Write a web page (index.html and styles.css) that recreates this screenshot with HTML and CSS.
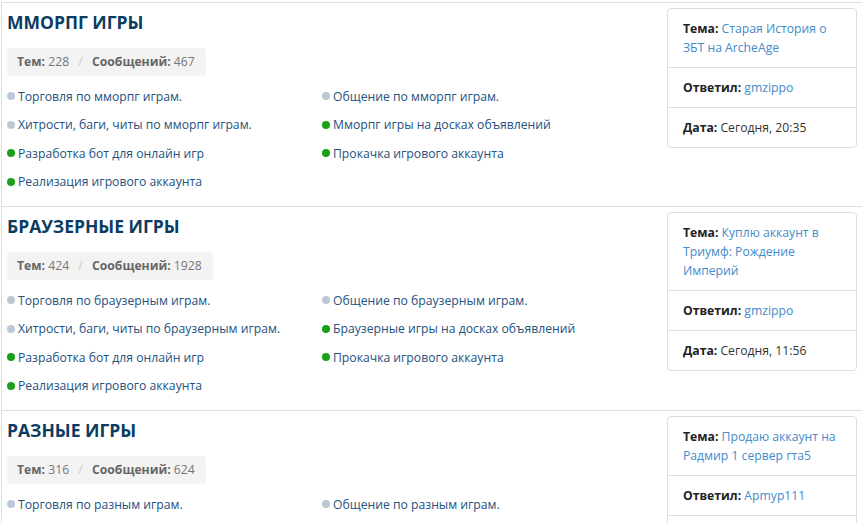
FILE: index.html
```html
<!DOCTYPE html>
<html lang="ru">
<head>
<meta charset="utf-8">
<title>Форум</title>
<link rel="stylesheet" href="styles.css">
</head>
<body>
<div class="forum">
  <section class="row">
    <div class="main">
      <h2 class="title">ММОРПГ ИГРЫ</h2>
      <div class="stats"><b>Тем:</b> 228 <span class="sep">/</span> <b>Сообщений:</b> 467</div>
      <ul class="subs">
        <li><span class="dot"></span><a href="#">Торговля по мморпг играм.</a></li>
        <li><span class="dot"></span><a href="#">Общение по мморпг играм.</a></li>
        <li><span class="dot"></span><a href="#">Хитрости, баги, читы по мморпг играм.</a></li>
        <li><span class="dot new"></span><a href="#">Мморпг игры на досках объявлений</a></li>
        <li><span class="dot new"></span><a href="#">Разработка бот для онлайн игр</a></li>
        <li><span class="dot new"></span><a href="#">Прокачка игрового аккаунта</a></li>
        <li><span class="dot new"></span><a href="#">Реализация игрового аккаунта</a></li>
      </ul>
    </div>
    <aside class="last">
      <div class="cell"><b>Тема:</b> <a href="#">Старая История о ЗБТ на ArcheAge</a></div>
      <div class="cell"><b>Ответил:</b> <a href="#">gmzippo</a></div>
      <div class="cell"><b>Дата:</b> Сегодня, 20:35</div>
    </aside>
  </section>
  <section class="row">
    <div class="main">
      <h2 class="title">БРАУЗЕРНЫЕ ИГРЫ</h2>
      <div class="stats"><b>Тем:</b> 424 <span class="sep">/</span> <b>Сообщений:</b> 1928</div>
      <ul class="subs">
        <li><span class="dot"></span><a href="#">Торговля по браузерным играм.</a></li>
        <li><span class="dot"></span><a href="#">Общение по браузерным играм.</a></li>
        <li><span class="dot"></span><a href="#">Хитрости, баги, читы по браузерным играм.</a></li>
        <li><span class="dot new"></span><a href="#">Браузерные игры на досках объявлений</a></li>
        <li><span class="dot new"></span><a href="#">Разработка бот для онлайн игр</a></li>
        <li><span class="dot new"></span><a href="#">Прокачка игрового аккаунта</a></li>
        <li><span class="dot new"></span><a href="#">Реализация игрового аккаунта</a></li>
      </ul>
    </div>
    <aside class="last">
      <div class="cell"><b>Тема:</b> <a href="#">Куплю аккаунт в Триумф: Рождение Империй</a></div>
      <div class="cell"><b>Ответил:</b> <a href="#">gmzippo</a></div>
      <div class="cell"><b>Дата:</b> Сегодня, 11:56</div>
    </aside>
  </section>
  <section class="row">
    <div class="main">
      <h2 class="title">РАЗНЫЕ ИГРЫ</h2>
      <div class="stats"><b>Тем:</b> 316 <span class="sep">/</span> <b>Сообщений:</b> 624</div>
      <ul class="subs">
        <li><span class="dot"></span><a href="#">Торговля по разным играм.</a></li>
        <li><span class="dot"></span><a href="#">Общение по разным играм.</a></li>
        <li><span class="dot"></span><a href="#">Хитрости, баги, читы по разным играм.</a></li>
        <li><span class="dot new"></span><a href="#">Разные игры на досках объявлений</a></li>
      </ul>
    </div>
    <aside class="last">
      <div class="cell"><b>Тема:</b> <a href="#">Продаю аккаунт на Радмир 1 сервер гта5</a></div>
      <div class="cell"><b>Ответил:</b> <a href="#">Apmyp111</a></div>
      <div class="cell"><b>Дата:</b> Сегодня, 10:12</div>
    </aside>
  </section>
</div>
</body>
</html>
```

FILE: styles.css
```css
html, body {
  margin: 0;
  padding: 0;
  background: #fff;
}
body {
  font-family: "Open Sans", "Liberation Sans", sans-serif;
  font-size: 12px;
  color: #333;
}
.forum {
  margin: 2px 0 0 1px;
  border-top: 1px solid #ddd;
  border-left: 1px solid #ddd;
}
.row {
  display: flex;
  align-items: flex-start;
  padding: 5px 5px 10px 5px;
  border-bottom: 1px solid #ddd;
}
.main {
  flex: 1;
  min-width: 0;
}
.title {
  margin: 0;
  font-size: 17.5px;
  line-height: 28px;
  font-weight: 700;
  color: #0b3c61;
}
.stats {
  display: inline-block;
  margin-top: 12px;
  height: 28px;
  line-height: 28px;
  padding: 0 11px 0 10px;
  background: #f3f3f3;
  border-radius: 4px;
  color: #777;
  font-size: 12.2px;
}
.stats b {
  color: #666;
}
.stats .sep {
  color: #ccc;
  margin: 0 6px;
}
.subs {
  list-style: none;
  margin: 6px 0 0;
  padding: 0;
  display: grid;
  grid-template-columns: 315px 1fr;
}
.subs li {
  display: flex;
  align-items: center;
  height: 28.5px;
  font-size: 12.2px;
  white-space: nowrap;
}
.subs a {
  color: #24517e;
  text-decoration: none;
}
.dot {
  width: 8px;
  height: 8px;
  border-radius: 50%;
  background: #bcc8d4;
  margin-right: 3px;
  flex: none;
}
.dot.new {
  background: #18a018;
}
.last {
  width: 188px;
  flex: none;
  border: 1px solid #ddd;
  border-radius: 4px;
}
.cell {
  padding: 10px 15px;
  line-height: 19px;
  font-size: 12.2px;
  color: #333;
}
.cell + .cell {
  border-top: 1px solid #ddd;
}
.cell b {
  color: #222;
}
.cell a {
  color: #428bca;
  text-decoration: none;
}
```
